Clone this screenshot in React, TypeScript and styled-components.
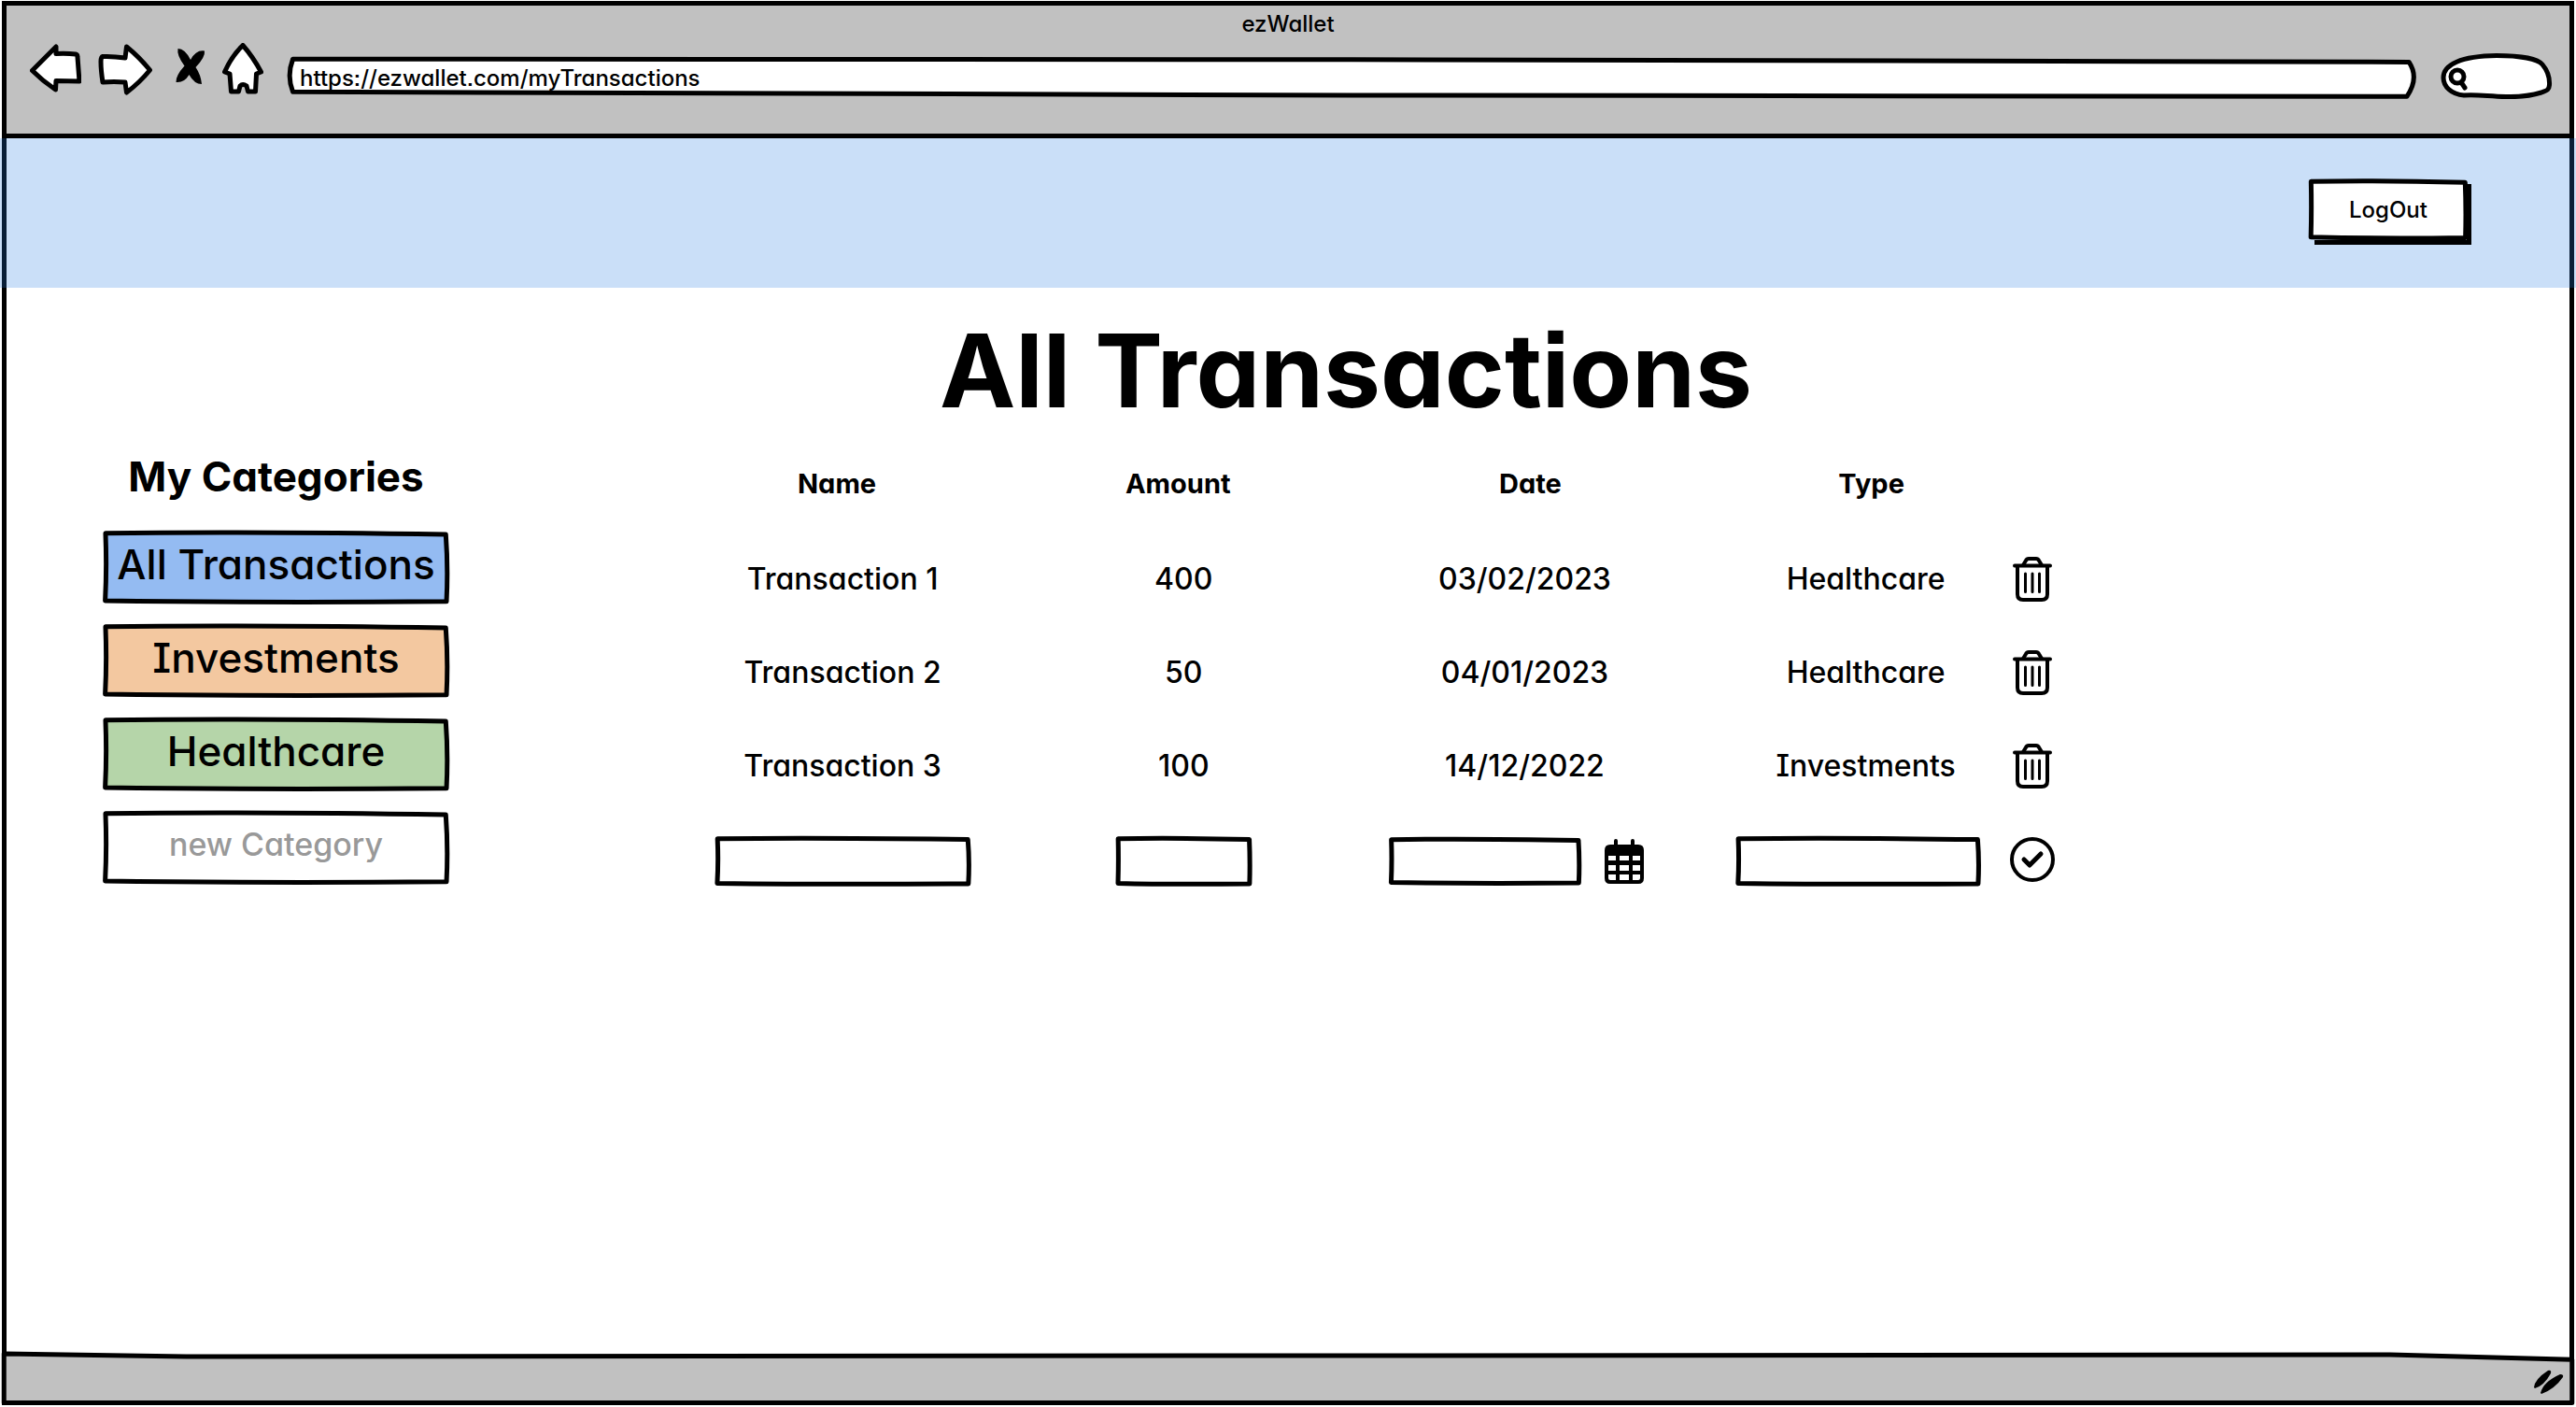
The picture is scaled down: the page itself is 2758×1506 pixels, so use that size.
import React from "react";
import styled, { createGlobalStyle } from "styled-components";

const INK = "#000000";
const CHROME = "#c1c1c1";
const LINE = "5px";

const GlobalStyle = createGlobalStyle`
  *, *::before, *::after {
    box-sizing: border-box;
  }
  body {
    margin: 0;
    background: #ffffff;
    color: ${INK};
    font-family: Inter, "Liberation Sans", sans-serif;
    font-weight: 500;
    font-feature-settings: "cv11", "cv08", "ss07";
  }
  button, input {
    font: inherit;
    font-feature-settings: inherit;
    color: inherit;
  }
`;

const Window = styled.div`
  display: flex;
  flex-direction: column;
  min-height: calc(100vh - 3px);
  margin: 1px 2px 2px;
  border: ${LINE} solid ${INK};
  border-bottom-right-radius: 8px;
`;

const Chrome = styled.header`
  display: flex;
  flex-direction: column;
  padding-bottom: 37px;
  background: ${CHROME};
  border-bottom: ${LINE} solid ${INK};
`;

const WindowTitle = styled.div`
  font-size: 24px;
  line-height: 40px;
  text-align: center;
`;

const Toolbar = styled.div`
  display: flex;
  align-items: flex-end;
  gap: 27px;
  height: 60px;
  padding: 0 18px 0 25px;
`;

const Nav = styled.nav`
  display: flex;
  align-self: flex-start;
  gap: 18px;
`;

const IconButton = styled.button`
  display: block;
  padding: 0;
  border: 0;
  background: none;
  cursor: pointer;

  svg {
    display: block;
  }
`;

const SketchBox = styled.div<{ $grow?: boolean; $width?: number; $height: number }>`
  position: relative;
  display: flex;
  flex: ${(p) => (p.$grow ? "1 1 auto" : "0 0 auto")};
  width: ${(p) => (p.$width ? `${p.$width}px` : "auto")};
  height: ${(p) => p.$height}px;
`;

const Outline = styled.svg<{ $fill: string }>`
  position: absolute;
  inset: 0;
  width: 100%;
  height: 100%;
  overflow: visible;
  pointer-events: none;

  path {
    fill: ${(p) => p.$fill};
    stroke: ${INK};
    stroke-width: ${LINE};
    stroke-linejoin: round;
    vector-effect: non-scaling-stroke;
  }
`;

const Field = styled.input<{ $align?: string; $pad?: number }>`
  position: relative;
  flex: 1;
  min-width: 0;
  padding: 0 ${(p) => p.$pad ?? 12}px;
  border: 0;
  outline: 0;
  background: transparent;
  text-align: ${(p) => p.$align ?? "left"};
`;

const UrlField = styled(Field)`
  font-size: 24px;
`;

const TransactionField = styled(Field)`
  font-size: 32px;
`;

const SearchForm = styled.form`
  position: relative;
  display: flex;
  width: 120px;
  height: 49px;
`;

const SearchShape = styled.svg`
  position: absolute;
  inset: 0;
`;

const Banner = styled.div`
  display: flex;
  justify-content: flex-end;
  height: 160px;
  margin: 0 -7px;
  padding: 44px 117px 0;
  background: rgba(37, 124, 226, 0.243);
`;

const LogOutBox = styled(SketchBox)`
  box-shadow: 5px 5px 0 ${INK};
`;

const LogOutButton = styled.button`
  position: relative;
  flex: 1;
  padding: 0;
  border: 0;
  background: transparent;
  font-size: 24px;
  cursor: pointer;
`;

const Content = styled.div`
  display: flex;
  flex: 1;
  gap: 188px;
  padding-left: 103px;
`;

const Sidebar = styled.aside`
  flex: 0 0 371px;
  min-width: 0;
  padding-top: 172px;
`;

const SidebarTitle = styled.h2`
  margin: 0 0 28px;
  font-size: 44px;
  font-weight: 700;
  line-height: 60px;
  text-align: center;
`;

const CategoryList = styled.ul`
  display: flex;
  flex-direction: column;
  gap: 21px;
  margin: 0;
  padding: 0;
  list-style: none;
`;

const CategoryButton = styled.button`
  position: relative;
  flex: 1;
  padding: 0 0 8px;
  border: 0;
  background: transparent;
  font-size: 44px;
  white-space: nowrap;
  cursor: pointer;
`;

const CategoryField = styled(Field)`
  padding: 0 0 8px;
  font-size: 34px;

  &::placeholder {
    color: #999999;
    opacity: 1;
  }
`;

const Main = styled.main`
  flex: 1;
  max-width: 1554px;
  padding-top: 18px;
`;

const Title = styled.h1`
  margin: 0;
  padding-right: 10px;
  font-size: 109px;
  font-weight: 700;
  line-height: 140px;
  text-align: center;
`;

const Table = styled.table`
  width: 100%;
  table-layout: fixed;
  border-collapse: collapse;

  th, td {
    height: 100px;
    padding: 0;
    text-align: center;
    vertical-align: middle;
    font-size: 32px;
    line-height: 40px;
  }
  th {
    height: 104px;
    font-size: 29px;
    font-weight: 700;
  }
  th:nth-child(-n + 2) {
    padding-right: 12px;
  }
  th:nth-child(n + 3) {
    padding-left: 12px;
  }
`;

const Column = styled.col<{ $share: number }>`
  width: ${(p) => p.$share}%;
`;

const FieldGroup = styled.div<{ $shift?: boolean }>`
  display: flex;
  align-items: center;
  justify-content: center;
  gap: 26px;
  padding-top: 4px;
  padding-right: ${(p) => (p.$shift ? 16 : 0)}px;
`;

const CellIcon = styled(IconButton)`
  margin: 0 auto;
`;

const StatusBar = styled.footer`
  position: relative;
  display: flex;
  align-items: center;
  justify-content: flex-end;
  height: 48px;
  padding: 10px 4px 0;
`;

const Grip = styled.svg`
  position: relative;
`;

const OUTLINES = {
  box: "M.8 3.500 Q40 1 99 5 Q99.700 50 99.200 96 Q45 98 .7 95 Q1.200 50 .8 3.500Z",
  url: "M.2 5 L50 6 L99.700 12 Q100.200 50 99.600 94 L50 91 L.2 83 Q-.1 45 .2 5Z",
  status: "M-.1 -4 L7 2 L93 -2 L100.100 9 L100.100 105 L-.1 105Z",
};

function SketchOutline({ shape = "box", fill = "#ffffff" }: { shape?: keyof typeof OUTLINES; fill?: string }) {
  return (
    <Outline $fill={fill} viewBox="0 0 100 100" preserveAspectRatio="none" aria-hidden="true">
      <path d={OUTLINES[shape]} />
    </Outline>
  );
}

const arrowStyle = { fill: "#ffffff", stroke: INK, strokeWidth: 5, strokeLinejoin: "round" as const };

const BackIcon = () => (
  <svg width="55" height="56" viewBox="0 0 55 56" aria-hidden="true">
    <path {...arrowStyle} d="M2.5 29.5 L28 4 L28 11.500 Q40 11 49 12 Q51 12.500 51 15 L53 41 L28 40.500 L27.500 50 Q14 41 2.500 29.500Z" />
  </svg>
);

const ForwardIcon = () => (
  <svg width="58" height="56" viewBox="0 0 58 56" aria-hidden="true">
    <path {...arrowStyle} d="M5 14.500 Q16 14 29 16 L30.500 4 Q44 15 55.500 29 Q45 42 30.500 53 L29 42 Q17 41 5 42 Q3 29 3 20 Q3 15 5 14.500Z" />
  </svg>
);

const StopIcon = () => (
  <svg width="39" height="56" viewBox="0 0 39 56" aria-hidden="true">
    <path d="M9.500 6 Q17 6 23 18 Q29 7 38 8.500 Q39 15 28.500 26 Q34 34 35 44 Q27 44 21.500 34 Q16 43 7.500 42 Q7 35 16.500 24.500 Q8 13 9.500 6Z" />
  </svg>
);

const HomeIcon = () => (
  <svg width="44" height="56" viewBox="0 0 44 56" aria-hidden="true">
    <path {...arrowStyle} d="M22 2.500 Q33 15 41.500 31 L36.500 33 L35.500 52 L27.500 52 L26 46 Q22 43 19 46 L17.500 52 L9.500 52 L8 33 L2.500 31 Q10 14 22 2.500Z" />
  </svg>
);

const TrashIcon = () => (
  <svg width="42" height="48" viewBox="0 0 42 48" fill="none" stroke={INK} strokeWidth="4" strokeLinecap="round" strokeLinejoin="round" aria-hidden="true">
    <path d="M2 9.500 H40" />
    <path d="M11 9 L14 4 Q15 2 17 2 H25 Q27 2 28 4 L31 9" />
    <path d="M5 10 V40 Q5 46 11 46 H31 Q37 46 37 40 V10" />
    <path strokeWidth="3" d="M13.500 18 V37.500 M21 18 V37.500 M28.500 18 V37.500" />
  </svg>
);

const CalendarIcon = () => (
  <svg width="42" height="48" viewBox="0 0 42 48" aria-hidden="true">
    <path d="M10 8 V2 Q10 0 12 0 Q14 0 14 2 V8Z M28 8 V2 Q28 0 30 0 Q32 0 32 2 V8Z" />
    <path
      fillRule="evenodd"
      d="M6 6 H36 Q42 6 42 12 V42 Q42 48 36 48 H6 Q0 48 0 42 V12 Q0 6 6 6Z
         M4 18 V23 H12 V18Z M16 18 V23 H26 V18Z M30 18 V23 H38 V18Z
         M4 28 V34 H12 V28Z M16 28 V34 H26 V28Z M30 28 V34 H38 V28Z
         M4 38 V42 Q4 44 6 44 H12 V38Z M16 38 V44 H26 V38Z M30 38 V44 H36 Q38 44 38 42 V38Z"
    />
  </svg>
);

const ConfirmIcon = () => (
  <svg width="48" height="48" viewBox="0 0 48 48" fill="none" stroke={INK} strokeLinecap="round" strokeLinejoin="round" aria-hidden="true">
    <circle cx="24" cy="24" r="22" strokeWidth="4" />
    <path strokeWidth="5" d="M15 24 L21 30 L33 18" />
  </svg>
);

const categories = [
  { name: "All Transactions", color: "#94bbf2" },
  { name: "Investments", color: "#f3c8a0" },
  { name: "Healthcare", color: "#b5d5a9" },
];

const transactions = [
  { name: "Transaction 1", amount: 400, date: "03/02/2023", type: "Healthcare" },
  { name: "Transaction 2", amount: 50, date: "04/01/2023", type: "Healthcare" },
  { name: "Transaction 3", amount: 100, date: "14/12/2022", type: "Investments" },
];

export default function App() {
  return (
    <>
      <GlobalStyle />
      <Window>
        <Chrome>
          <WindowTitle>ezWallet</WindowTitle>
          <Toolbar>
            <Nav aria-label="Browser">
              <IconButton aria-label="Back"><BackIcon /></IconButton>
              <IconButton aria-label="Forward"><ForwardIcon /></IconButton>
              <IconButton aria-label="Stop"><StopIcon /></IconButton>
              <IconButton aria-label="Home"><HomeIcon /></IconButton>
            </Nav>
            <SketchBox $grow $height={45}>
              <SketchOutline shape="url" />
              <UrlField aria-label="Address" defaultValue="https://ezwallet.com/myTransactions" />
            </SketchBox>
            <SearchForm role="search">
              <SearchShape width="120" height="49" viewBox="0 0 120 49" aria-hidden="true">
                <path
                  fill="#ffffff"
                  stroke={INK}
                  strokeWidth="5"
                  d="M3 26 C3 12 22 3 60 2.500 C85 2.500 104 6 109 12 C114 18 117 26 116.500 34 C116 40 113 40 108 42 C95 46 85 47 70 46.500 C50 46 40 44 25 45 C12 44 3 36 3 26Z"
                />
                <circle cx="18" cy="25" r="7" fill="none" stroke={INK} strokeWidth="5" />
                <path d="M22 31 L26 37" stroke={INK} strokeWidth="5" strokeLinecap="round" />
              </SearchShape>
              <Field aria-label="Search" $pad={32} />
            </SearchForm>
          </Toolbar>
        </Chrome>

        <Banner>
          <LogOutBox $width={168} $height={65}>
            <SketchOutline />
            <LogOutButton>LogOut</LogOutButton>
          </LogOutBox>
        </Banner>

        <Content>
          <Sidebar>
            <SidebarTitle>My Categories</SidebarTitle>
            <CategoryList>
              {categories.map((category) => (
                <li key={category.name}>
                  <SketchBox $height={79}>
                    <SketchOutline fill={category.color} />
                    <CategoryButton>{category.name}</CategoryButton>
                  </SketchBox>
                </li>
              ))}
              <li>
                <SketchBox $height={79}>
                  <SketchOutline />
                  <CategoryField aria-label="New category" placeholder="new Category" $align="center" />
                </SketchBox>
              </li>
            </CategoryList>
          </Sidebar>

          <Main>
            <Title>All Transactions</Title>
            <Table>
              <colgroup>
                <Column $share={30} />
                <Column $share={17} />
                <Column $share={30} />
                <Column $share={17} />
                <Column $share={6} />
              </colgroup>
              <thead>
                <tr>
                  <th scope="col">Name</th>
                  <th scope="col">Amount</th>
                  <th scope="col">Date</th>
                  <th scope="col">Type</th>
                  <td />
                </tr>
              </thead>
              <tbody>
                {transactions.map((row) => (
                  <tr key={row.name}>
                    <td>{row.name}</td>
                    <td>{row.amount}</td>
                    <td>{row.date}</td>
                    <td>{row.type}</td>
                    <td>
                      <CellIcon aria-label={`Delete ${row.name}`}><TrashIcon /></CellIcon>
                    </td>
                  </tr>
                ))}
                <tr>
                  <td>
                    <FieldGroup>
                      <SketchBox $width={273} $height={52}>
                        <SketchOutline />
                        <TransactionField aria-label="Name" />
                      </SketchBox>
                    </FieldGroup>
                  </td>
                  <td>
                    <FieldGroup>
                      <SketchBox $width={143} $height={52}>
                        <SketchOutline />
                        <TransactionField aria-label="Amount" />
                      </SketchBox>
                    </FieldGroup>
                  </td>
                  <td>
                    <FieldGroup $shift>
                      <SketchBox $width={204} $height={50}>
                        <SketchOutline />
                        <TransactionField aria-label="Date" />
                      </SketchBox>
                      <IconButton aria-label="Pick a date"><CalendarIcon /></IconButton>
                    </FieldGroup>
                  </td>
                  <td>
                    <FieldGroup $shift>
                      <SketchBox $width={261} $height={52}>
                        <SketchOutline />
                        <TransactionField aria-label="Type" />
                      </SketchBox>
                    </FieldGroup>
                  </td>
                  <td>
                    <CellIcon aria-label="Add transaction"><ConfirmIcon /></CellIcon>
                  </td>
                </tr>
              </tbody>
            </Table>
          </Main>
        </Content>

        <StatusBar>
          <SketchOutline shape="status" fill={CHROME} />
          <Grip width="34" height="28" viewBox="0 0 34 28" aria-hidden="true">
            <path d="M0 19 Q1 10 15 1 Q19 0 18 4 Q11 17 1 20Z M7 25 Q10 13 28 5 Q32 5 31 8 Q22 21 8 26Z" />
          </Grip>
        </StatusBar>
      </Window>
    </>
  );
}
